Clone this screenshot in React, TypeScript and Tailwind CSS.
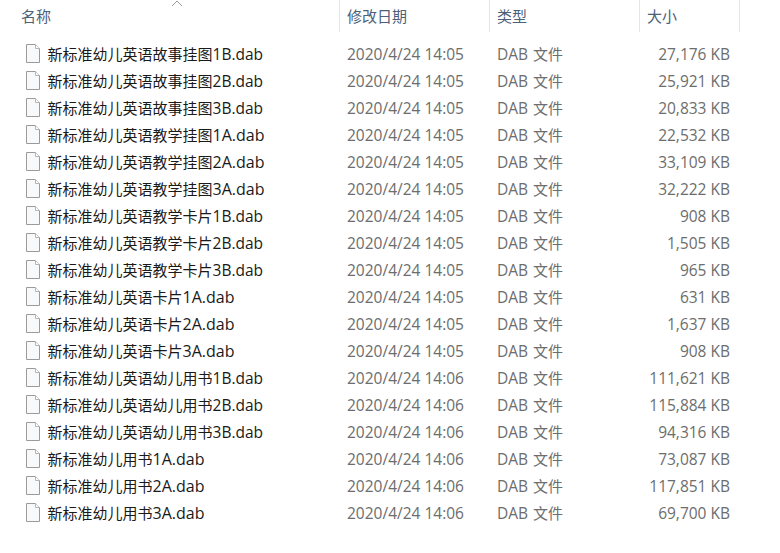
const rows: [string, string, string, string][] = [
  ["新标准幼儿英语故事挂图", "1B.dab", "14:05", "27,176 KB"],
  ["新标准幼儿英语故事挂图", "2B.dab", "14:05", "25,921 KB"],
  ["新标准幼儿英语故事挂图", "3B.dab", "14:05", "20,833 KB"],
  ["新标准幼儿英语教学挂图", "1A.dab", "14:05", "22,532 KB"],
  ["新标准幼儿英语教学挂图", "2A.dab", "14:05", "33,109 KB"],
  ["新标准幼儿英语教学挂图", "3A.dab", "14:05", "32,222 KB"],
  ["新标准幼儿英语教学卡片", "1B.dab", "14:05", "908 KB"],
  ["新标准幼儿英语教学卡片", "2B.dab", "14:05", "1,505 KB"],
  ["新标准幼儿英语教学卡片", "3B.dab", "14:05", "965 KB"],
  ["新标准幼儿英语卡片", "1A.dab", "14:05", "631 KB"],
  ["新标准幼儿英语卡片", "2A.dab", "14:05", "1,637 KB"],
  ["新标准幼儿英语卡片", "3A.dab", "14:05", "908 KB"],
  ["新标准幼儿英语幼儿用书", "1B.dab", "14:06", "111,621 KB"],
  ["新标准幼儿英语幼儿用书", "2B.dab", "14:06", "115,884 KB"],
  ["新标准幼儿英语幼儿用书", "3B.dab", "14:06", "94,316 KB"],
  ["新标准幼儿用书", "1A.dab", "14:06", "73,087 KB"],
  ["新标准幼儿用书", "2A.dab", "14:06", "117,851 KB"],
  ["新标准幼儿用书", "3A.dab", "14:06", "69,700 KB"],
];

function FileIcon() {
  return (
    <svg width="14" height="19" viewBox="0 0 14 19" className="shrink-0 mb-[2px]">
      <path d="M.5.5H9.5L13.5 4.5V18.5H.5Z" fill="#f8f9fa" stroke="#9a9a9a" />
      <path d="M9.5.5V4.5H13.5" fill="#fff" stroke="#b5b5b5" />
    </svg>
  );
}

export default function App() {
  return (
    <div className="relative w-[780px] h-[553px] overflow-hidden bg-white font-['Open_Sans','Noto_Sans_CJK_SC',sans-serif] text-[15px]">
      <svg width="12" height="7" viewBox="0 0 12 7" className="absolute left-[171px] top-0">
        <path d="M1 6L6 1L11 6" fill="none" stroke="#9a9a9a" />
      </svg>
      <div className="flex h-[32px] text-[#4c607a] leading-[32px]">
        <div className="w-[340px] pl-[21px] border-r border-[#e5e5e5]">名称</div>
        <div className="w-[150px] pl-[7px] border-r border-[#e5e5e5]">修改日期</div>
        <div className="w-[150px] pl-[7px] border-r border-[#e5e5e5]">类型</div>
        <div className="w-[100px] pl-[7px] border-r border-[#e5e5e5]">大小</div>
      </div>
      <div className="pt-[9px]">
        {rows.map(([stem, suffix, time, size]) => (
          <div key={stem + suffix} className="flex h-[27px] items-center leading-[27px] text-[#6d6d6d]">
            <div className="w-[340px] pl-[26px] flex items-center gap-[7.5px] text-[#1a1a1a] whitespace-nowrap">
              <FileIcon />
              <span>
                {stem}
                <span className={suffix.includes("A") ? "text-[16px]" : "text-[15.5px]"}>{suffix}</span>
              </span>
            </div>
            <div className="w-[150px] pl-[7px] whitespace-nowrap text-[15.5px]">2020/4/24 {time}</div>
            <div className="w-[150px] pl-[7px] whitespace-nowrap">
              <span className="text-[15.5px] mr-[1px]">DAB</span> 文件
            </div>
            <div className="w-[90px] text-right whitespace-nowrap text-[15.5px]">{size}</div>
          </div>
        ))}
      </div>
    </div>
  );
}
